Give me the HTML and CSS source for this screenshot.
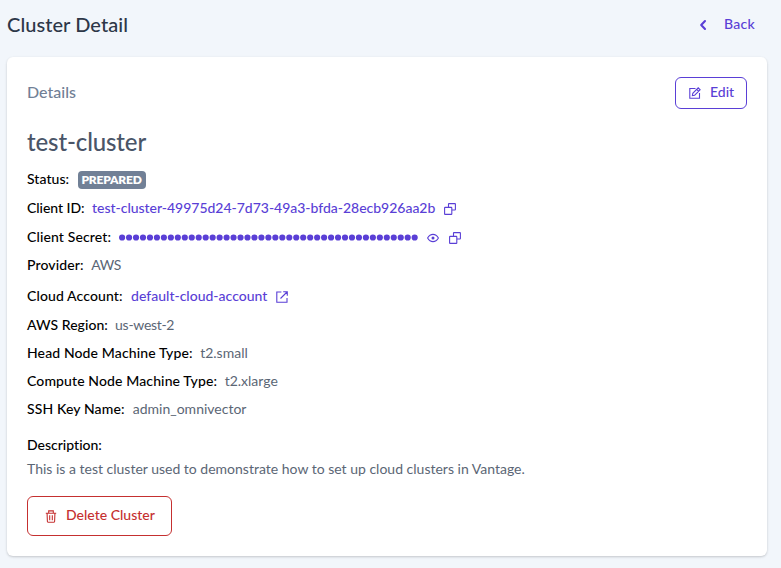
FILE: index.html
```html
<!DOCTYPE html>
<html lang="en">
<head>
<meta charset="utf-8">
<title>Cluster Detail</title>
<link rel="stylesheet" href="styles.css">
</head>
<body>
<header class="topbar">
  <h1 class="topbar-title">Cluster Detail</h1>
  <a class="back"><svg class="icon" width="8" height="12" viewBox="0 0 8 12"><path class="chevron" d="M6 2 2.200 6 6 10"/></svg><span class="text">Back</span></a>
</header>
<main class="card">
  <div class="card-head">
    <h2 class="card-title">Details</h2>
    <button class="btn btn-edit">
      <svg class="icon" width="12" height="12" viewBox="0 0 12 12"><path d="M6.500 1.500H.8v9.700h9.700V6"/><path d="M3.400 8.600l.4-2.300L9.200.9l1.900 1.900-5.400 5.400zM7.700 2.400l1.900 1.900"/></svg>
      <span class="text">Edit</span>
    </button>
  </div>
  <h3 class="name">test-cluster</h3>
  <div class="row"><span class="label label-status">Status:</span><span class="badge">PREPARED</span></div>
  <div class="row row-wide"><span class="label label-id">Client ID:</span><span class="link link-id">test-cluster-49975d24-7d73-49a3-bfda-28ecb926aa2b</span>
    <svg class="icon" width="12" height="12" viewBox="0 0 12 12"><path d="M4.500 4.200V1.100q0-.5.5-.5h5.900q.5 0 .5.500v5.400q0 .5-.5.500H8M1.100 4.400h6.200q.5 0 .5.500v6q0 .5-.5.500H1.100q-.5 0-.5-.5v-6q0-.5.5-.5z"/></svg></div>
  <div class="row row-wide"><span class="label">Client Secret:</span><svg class="dots" width="300" height="7" viewBox="0 0 300 7"><path d="M3.100 3.500h292.600"/></svg>
    <svg class="icon eye" width="12" height="10" viewBox="0 0 12 10"><path d="M.6 5C2 2.600 3.900 1.400 6 1.400S10 2.600 11.400 5C10 7.400 8.100 8.600 6 8.600S2 7.400.6 5z"/><circle class="pupil" cx="6" cy="5" r="1.500"/></svg>
    <svg class="icon" width="12" height="12" viewBox="0 0 12 12"><path d="M4.500 4.200V1.100q0-.5.5-.5h5.900q.5 0 .5.500v5.400q0 .5-.5.500H8M1.100 4.400h6.200q.5 0 .5.500v6q0 .5-.5.500H1.100q-.5 0-.5-.5v-6q0-.5.5-.5z"/></svg></div>
  <div class="row"><span class="label">Provider:</span><span class="value value-tight">AWS</span></div>
  <div class="row row-account"><span class="label label-account">Cloud Account:</span><span class="link">default-cloud-account</span>
    <svg class="icon" width="12" height="12" viewBox="0 0 12 12"><path d="M5.400 1H.8v10.200H11V7M7.200.7h4.100v4.100M11 1 4.500 7.500"/></svg></div>
  <div class="row row-wide"><span class="label label-region">AWS Region:</span><span class="value value-tight">us-west-2</span></div>
  <div class="row"><span class="label">Head Node Machine Type:</span><span class="value">t2.small</span></div>
  <div class="row"><span class="label">Compute Node Machine Type:</span><span class="value">t2.xlarge</span></div>
  <div class="row"><span class="label label-key">SSH Key Name:</span><span class="value">admin_omnivector</span></div>
  <div class="row row-desc"><span class="label label-plain">Description:</span></div>
  <p class="description">This is a test cluster used to demonstrate how to set up cloud clusters in Vantage.</p>
  <button class="btn btn-delete">
    <svg class="icon" width="12" height="13" viewBox="0 0 12 13"><path d="M.8 3.300h10.400M3.700 3V.9h4.600V3M2.100 3.500l.3 8.100q0 .6.600.6h6q.6 0 .6-.6l.3-8.100M4.700 5.300v5M7.300 5.300v5"/></svg>
    <span class="text">Delete Cluster</span>
  </button>
</main>
</body>
</html>
```
FILE: styles.css
```css
* { box-sizing: border-box; }
body {
  margin: 0;
  height: 568px;
  background: #f2f6fb;
  font-family: Lato, "Open Sans", sans-serif;
  font-size: 14px;
  line-height: 20px;
  font-weight: 500;
  font-variant-ligatures: none;
}
h1, h2, h3, p { margin: 0; }

.topbar {
  display: flex;
  align-items: center;
  justify-content: space-between;
  height: 57px;
  padding: 0 26px 8px 7px;
}
.topbar-title { padding-bottom: 2px; font-size: 20px; font-weight: 500; line-height: 28px; color: #2d3748; letter-spacing: .06px; }
.back { display: flex; align-items: center; gap: 17px; color: #5a3fd6; letter-spacing: .3px; }
.text { padding-bottom: 2px; }

.icon { flex: none; fill: none; stroke: currentColor; stroke-width: 1.1; }
.chevron { stroke-width: 2.1; stroke-linecap: round; stroke-linejoin: round; }
.pupil { fill: currentColor; stroke: none; }

.card {
  width: 760px;
  height: 499px;
  margin-left: 7px;
  padding: 20px;
  background: #fff;
  border-radius: 6px;
  box-shadow: 0 1px 3px rgba(0, 0, 0, .12), 0 1px 2px rgba(0, 0, 0, .08);
}
.card-head { display: flex; align-items: center; justify-content: space-between; height: 32px; }
.card-title { padding-bottom: 2px; font-size: 16px; font-weight: 500; color: #718096; }

.btn {
  display: flex;
  align-items: center;
  background: #fff;
  border: 1px solid currentColor;
  border-radius: 6px;
  font: inherit;
}
.btn-edit { width: 72px; height: 32px; padding: 0 0 0 13px; gap: 9px; color: #5a3fd6; }
.btn-delete { width: 145px; height: 40px; margin-top: 17px; padding: 0 0 0 17px; gap: 9px; color: #c53030; }

.name { margin: 17px 0 12px; font-size: 24px; font-weight: 500; line-height: 32px; color: #4a5568; letter-spacing: -.12px; }

.row { display: flex; align-items: center; height: 20px; margin-top: 8px; color: #5a3fd6; }
.row-wide { margin-top: 9px; }
.row-account { margin-top: 11px; }
.row-desc { margin-top: 16px; }
.label, .link, .value { padding-bottom: 2px; white-space: nowrap; }
.label { margin-right: 7.5px; color: #000; letter-spacing: .12px; }
.label-plain { letter-spacing: 0; }
.label-status { margin-right: 8.4px; letter-spacing: .05px; }
.label-id { margin-right: 7.5px; letter-spacing: -.05px; }
.label-account { margin-right: 8.4px; }
.label-region { margin-right: 7.2px; letter-spacing: .05px; }
.label-key { margin-right: 8.2px; }
.link { margin-right: 9px; }
.link-id { letter-spacing: -.02px; }
.value { color: #5b6675; font-weight: 400; }
.value-tight { letter-spacing: -.3px; }
.badge {
  height: 18px;
  width: 68px;
  border-radius: 4px;
  background: #718096;
  color: #fff;
  font-size: 12px;
  font-weight: 800;
  line-height: 17px;
  text-align: center;
  letter-spacing: -.2px;
}
.dots { flex: none; margin-bottom: 1px; fill: none; stroke: currentColor; stroke-width: 6.2; stroke-linecap: round; stroke-dasharray: 0 6.966; }
.eye { margin: 0 10px 0 8px; }
.description { margin-top: 3px; font-weight: 400; color: #5b6675; }
```
